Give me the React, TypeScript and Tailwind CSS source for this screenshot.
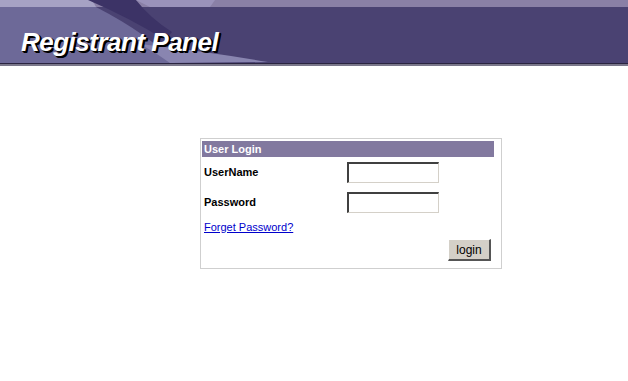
export default function App() {
  return (
    <div className="w-[628px] h-[381px] bg-white overflow-hidden" style={{ fontFamily: '"Liberation Sans", Arial, sans-serif' }}>
      {/* header banner */}
      <header className="relative h-[66px]">
        <svg width="628" height="63" viewBox="0 0 628 63" className="block">
          <rect x="0" y="0" width="628" height="63" fill="#4a4272" />
          <rect x="0" y="0" width="628" height="7" fill="#8a80a6" />
          <path d="M0 7 L96 7 Q150 35 175 63 L0 63 Z" fill="#6d6998" />
          <path d="M0 0 L92 0 L96 7 L0 7 Z" fill="#a6a2c4" />
          <path d="M88 0 L136 0 Q150 18 172 32 L165 40 Q130 18 88 0 Z" fill="#3c3366" />
          <path d="M136 0 L215 0 L210 7 L150 7 Z" fill="#9a92ba" />
          <path d="M140 44 Q210 52 268 62 L170 63 Q155 52 140 44 Z" fill="#8985b0" />
        </svg>
        <div className="h-px bg-[#2a2440]" />
        <div className="h-[2px] bg-[#7a778a]" />
        <h1
          className="absolute left-[21px] top-[29px] text-[26px] leading-none font-bold italic text-white tracking-[-0.5px]"
          style={{ textShadow: "2px 2px 0 #000, 1px 1px 0 #000, 2px 1px 0 #000" }}
        >
          Registrant Panel
        </h1>
      </header>

      {/* login box */}
      <div className="ml-[200px] mt-[72px] w-[302px] h-[131px] border border-[#cfcfcf] pl-px pt-[2px] text-[11px]">
        <div className="w-[292px] h-[16px] bg-[#82799f] text-white font-bold pl-[2px] leading-[16px]">
          User Login
        </div>
        <div className="flex items-center h-[21px] mt-[5px]">
          <span className="w-[145px] pl-[2px] font-bold text-black">UserName</span>
          <input className="w-[92px] h-[21px] border-t-2 border-l-2 border-b border-r border-t-[#404040] border-l-[#404040] border-b-[#d4d0c8] border-r-[#d4d0c8] bg-white outline-none" />
        </div>
        <div className="flex items-center h-[21px] mt-[9px]">
          <span className="w-[145px] pl-[2px] font-bold text-black">Password</span>
          <input type="password" className="w-[92px] h-[21px] border-t-2 border-l-2 border-b border-r border-t-[#404040] border-l-[#404040] border-b-[#d4d0c8] border-r-[#d4d0c8] bg-white outline-none" />
        </div>
        <div className="h-[14px] mt-[7px] pl-[2px] leading-[14px]">
          <a href="#" className="text-[#0000cc] underline">Forget Password?</a>
        </div>
        <div className="flex justify-end w-[289px] mt-[5px]">
          <button className="w-[43px] h-[22px] bg-[#d4d0c8] border-t border-l border-b-2 border-r-2 border-t-white border-l-white border-b-[#555] border-r-[#555] text-[12px] text-black leading-none">
            login
          </button>
        </div>
      </div>
    </div>
  );
}
